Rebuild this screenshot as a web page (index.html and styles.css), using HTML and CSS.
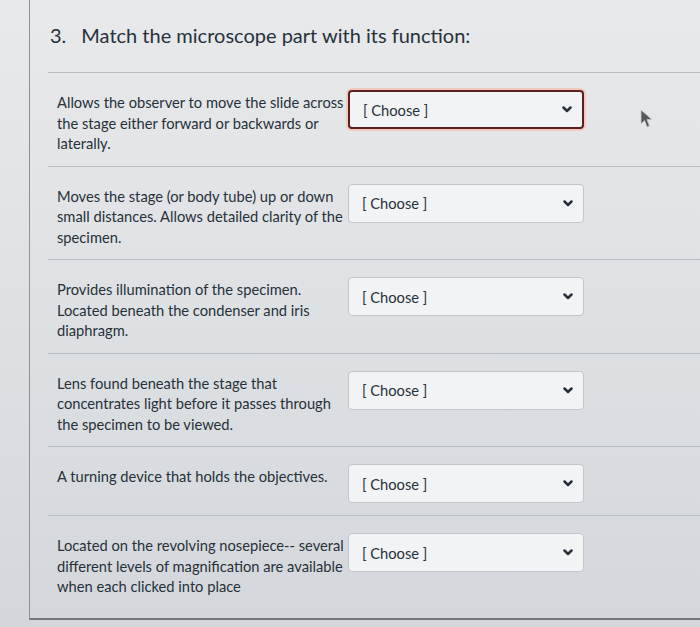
FILE: index.html
```html
<!DOCTYPE html>
<html lang="en">
<head>
    <meta charset="UTF-8">
    <title>Quiz question 3</title>
    <link rel="stylesheet" href="styles.css">
</head>
<body>
    <div class="quiz">
        <div class="question">
            <h2 class="q-title"><span class="q-num">3.</span>Match the microscope part with its function:</h2>
            <div class="q-body">
                <div class="match-row">
                    <div class="match-text">Allows the observer to move the slide across<br>the stage either forward or backwards or<br>laterally.</div>
                    <div class="select focused">
                        <span>[ Choose ]</span>
                        <svg class="chev" width="10" height="7" viewBox="0 0 10 7"><polyline points="1.5,1.5 5,5 8.5,1.5" /></svg>
                    </div>
                </div>
                <div class="match-row">
                    <div class="match-text">Moves the stage (or body tube) up or down<br>small distances. Allows detailed clarity of the<br>specimen.</div>
                    <div class="select">
                        <span>[ Choose ]</span>
                        <svg class="chev" width="10" height="7" viewBox="0 0 10 7"><polyline points="1.5,1.5 5,5 8.5,1.5" /></svg>
                    </div>
                </div>
                <div class="match-row">
                    <div class="match-text">Provides illumination of the specimen.<br>Located beneath the condenser and iris<br>diaphragm.</div>
                    <div class="select">
                        <span>[ Choose ]</span>
                        <svg class="chev" width="10" height="7" viewBox="0 0 10 7"><polyline points="1.5,1.5 5,5 8.5,1.5" /></svg>
                    </div>
                </div>
                <div class="match-row">
                    <div class="match-text">Lens found beneath the stage that<br>concentrates light before it passes through<br>the specimen to be viewed.</div>
                    <div class="select">
                        <span>[ Choose ]</span>
                        <svg class="chev" width="10" height="7" viewBox="0 0 10 7"><polyline points="1.5,1.5 5,5 8.5,1.5" /></svg>
                    </div>
                </div>
                <div class="match-row">
                    <div class="match-text">A turning device that holds the objectives.</div>
                    <div class="select">
                        <span>[ Choose ]</span>
                        <svg class="chev" width="10" height="7" viewBox="0 0 10 7"><polyline points="1.5,1.5 5,5 8.5,1.5" /></svg>
                    </div>
                </div>
                <div class="match-row">
                    <div class="match-text">Located on the revolving nosepiece-- several<br>different levels of magnification are available<br>when each clicked into place</div>
                    <div class="select">
                        <span>[ Choose ]</span>
                        <svg class="chev" width="10" height="7" viewBox="0 0 10 7"><polyline points="1.5,1.5 5,5 8.5,1.5" /></svg>
                    </div>
                </div>
            </div>
        </div>
    </div>
    <!-- mouse pointer left over the page -->
    <svg class="cursor" width="14" height="20" viewBox="0 0 14 20">
        <path d="M1 1 L1 15 L4.5 11.5 L7 18 L9.5 17 L7 10.5 L12 10.5 Z" />
    </svg>
</body>
</html>
```

FILE: styles.css
```css
*{
    padding: 0;
    margin: 0;
    box-sizing: border-box;
}
body {
    position: relative;
    height: 627px;
    overflow: hidden;
    background: linear-gradient(#e8e9eb, #dcdfe2 60%, #d3d7db);
    font-family: Lato, "Open Sans", sans-serif;
    color: #26313a;
}
.quiz {
    margin-left: 29px;
    height: 620px;
    border-left: 1px solid #8e9194;
    border-bottom: 2px solid #73777b;
    padding: 22px 0 0 18px;
}
.q-title {
    font-size: 20px;
    font-weight: 400;
    line-height: 26px;
    padding-left: 2px;
}
.q-num {
    margin-right: 15px;
}
.q-body {
    margin-top: 24px;
}
.match-row {
    display: flex;
    align-items: flex-start;
    padding: 17px 0 12px 9px;
    border-top: 1px solid #b8bdc1;
}
.match-text {
    width: 291px;
    margin-top: 2px;
    font-size: 14.7px;
    line-height: 20.5px;
    white-space: nowrap;
}
.select {
    width: 236px;
    height: 39px;
    display: flex;
    align-items: center;
    justify-content: space-between;
    padding: 0 10px 0 13px;
    border: 1px solid #c2c7cb;
    border-radius: 4px;
    background-color: #f2f3f4;
    font-size: 14.7px;
}
.select.focused {
    border: 2px solid #5a2020;
    box-shadow: 0 0 0 2px #f0cbbd;
}
.chev {
    fill: none;
    stroke: #26313a;
    stroke-width: 2.5;
    stroke-linecap: round;
    stroke-linejoin: round;
}
.cursor {
    position: absolute;
    left: 640px;
    top: 109px;
    fill: #55595d;
    stroke: #c9ccce;
    stroke-width: 0.8;
}
```
